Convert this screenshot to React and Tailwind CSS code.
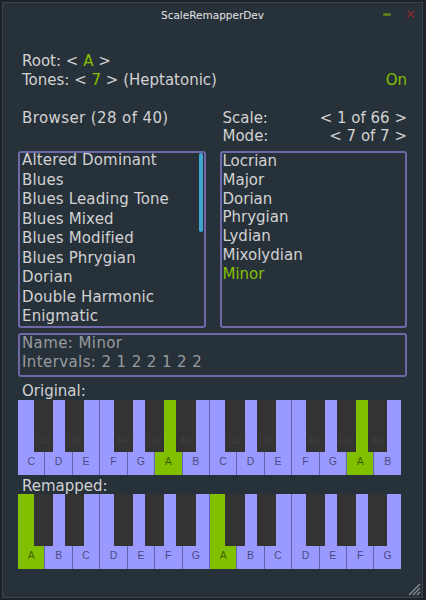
import React from 'react';

const WHITE_KEYS = ['C', 'D', 'E', 'F', 'G', 'A', 'B'];
// JUCE style black key offsets, in white key units
const BLACK_KEYS = [
  [0.58, 'C#'],
  [1.72, 'D#'],
  [3.51, 'F#'],
  [4.65, 'G#'],
  [5.79, 'A#'],
];

const BROWSER = [
  'Altered Dominant',
  'Blues',
  'Blues Leading Tone',
  'Blues Mixed',
  'Blues Modified',
  'Blues Phrygian',
  'Dorian',
  'Double Harmonic',
  'Enigmatic',
];

const MODES = ['Locrian', 'Major', 'Dorian', 'Phrygian', 'Lydian', 'Mixolydian', 'Minor'];

const Keyboard = ({ offset, highlight, blackLabels }) => {
  const whites = Array.from({ length: 14 }, (_, i) => WHITE_KEYS[(i + offset) % 7]);
  const blacks = [0, 1].flatMap((oct) =>
    BLACK_KEYS.map(([pos, name]) => ({ left: ((pos + oct * 7) * 100) / 14, name }))
  );

  return (
    <div className="relative flex w-[383px] h-[75px]">
      {whites.map((name, i) => (
        <div
          key={i}
          className={`flex-1 flex items-end justify-center pb-[8px] ${
            i < 13 ? 'border-r border-[#6464ae]' : ''
          } ${highlight.includes(i) ? 'bg-[#80c000]' : 'bg-[#9999ff]'}`}
        >
          <span className="text-[10.5px] leading-[12px] text-black/55 font-['Liberation_Sans',sans-serif]">
            {name}
          </span>
        </div>
      ))}
      {blacks.map((b, i) => (
        <div
          key={i}
          className="absolute top-0 h-[52px] w-[5%] bg-[#333333] flex items-end justify-center pb-[6px]"
          style={{ left: `${b.left}%` }}
        >
          {blackLabels && (
            <span className="text-[10.5px] leading-[12px] text-[#3f3f3f] font-['Liberation_Sans',sans-serif]">
              {b.name}
            </span>
          )}
        </div>
      ))}
    </div>
  );
};

export default function App() {
  return (
    <div className="w-[426px] h-[600px] bg-[#1d2329] pt-[2px] pl-[2px] font-['DejaVu_Sans',sans-serif] text-[15px] text-[#d2d2d2]">
      <div className="w-[421px] h-[596px] border border-[#3a444b] bg-[#27313a] flex flex-col">
        {/* title bar */}
        <div className="grid grid-cols-[1fr_auto_1fr] items-center h-[23px]">
          <div />
          <div className="text-[10.5px] leading-[12px] text-[#e4e4e4] pt-[1px]">ScaleRemapperDev</div>
          <div className="flex justify-end items-center pr-[7px] gap-[16px]">
            <div className="w-[8px] h-[2.5px] rounded-full bg-[#5f7a20]" />
            <svg width="8" height="8" viewBox="0 0 8 8" className="mt-[-1px]">
              <path d="M0.5 0.5 L7.5 7.5 M7.5 0.5 L0.5 7.5" stroke="#7c2b35" strokeWidth="1.6" />
            </svg>
          </div>
        </div>

        <div className="flex-1 flex flex-col px-[15px]">
          {/* root / tones */}
          <div className="mt-[26px] pl-[4px] leading-[19px]">
            <div>
              Root: &lt; <span className="text-[#84c000]">A</span> &gt;
            </div>
            <div className="flex justify-between">
              <span>
                Tones: &lt; <span className="text-[#84c000]">7</span> &gt; (Heptatonic)
              </span>
              <span className="text-[#84c000]">On</span>
            </div>
          </div>

          {/* browser header / scale + mode */}
          <div className="mt-[19px] grid grid-cols-2 gap-[14px]">
            <div className="pl-[4px] leading-[19px] tracking-[0.4px]">Browser (28 of 40)</div>
            <div className="pl-[3px] leading-[18px]">
              <div className="flex justify-between">
                <span>Scale:</span>
                <span>&lt; 1 of 66 &gt;</span>
              </div>
              <div className="flex justify-between">
                <span>Mode:</span>
                <span>&lt; 7 of 7 &gt;</span>
              </div>
            </div>
          </div>

          {/* lists */}
          <div className="mt-[6px] grid grid-cols-2 gap-[14px] h-[177px]">
            <div className="border-2 border-[#6f68a8] rounded-[3px] flex overflow-hidden">
              <div className="flex-1 pl-[2px] -mt-[2px] leading-[19.5px] tracking-[0.15px]">
                {BROWSER.map((s) => (
                  <div key={s}>{s}</div>
                ))}
              </div>
              <div className="w-[4px] mr-[1px]">
                <div className="h-[79px] rounded-[2px] bg-[#3ea6d0]" />
              </div>
            </div>
            <div className="border-2 border-[#6f68a8] rounded-[3px] pl-[1px] leading-[18.8px]">
              <div className="-mt-[1px]">
                {MODES.map((s) => (
                  <div key={s} className={s === 'Minor' ? 'text-[#84c000]' : ''}>
                    {s}
                  </div>
                ))}
              </div>
            </div>
          </div>

          {/* info */}
          <div className="mt-[5px] h-[44px] border-2 border-[#6f68a8] rounded-[3px] pl-[2px] leading-[18.7px] tracking-[0.4px] text-[#979b9e]">
            <div className="-mt-[1px]">Name: Minor</div>
            <div>Intervals: 2 1 2 2 1 2 2</div>
          </div>

          {/* keyboards */}
          <div className="mt-[6px] pl-[4px] leading-[16px]">Original:</div>
          <div className="mt-[1px]">
            <Keyboard offset={0} highlight={[5, 12]} blackLabels />
          </div>
          <div className="mt-[3px] pl-[4px] leading-[16px]">Remapped:</div>
          <Keyboard offset={5} highlight={[0, 7]} />

          <div className="flex-1 flex items-end justify-end -mr-[15px] pr-[1px] pb-[1px]">
            <svg width="13" height="13" viewBox="0 0 13 13">
              <path d="M1 12 L12 1 M5 12 L12 5 M9 12 L12 9" stroke="#8a9397" strokeWidth="1.2" />
            </svg>
          </div>
        </div>
      </div>
    </div>
  );
}
